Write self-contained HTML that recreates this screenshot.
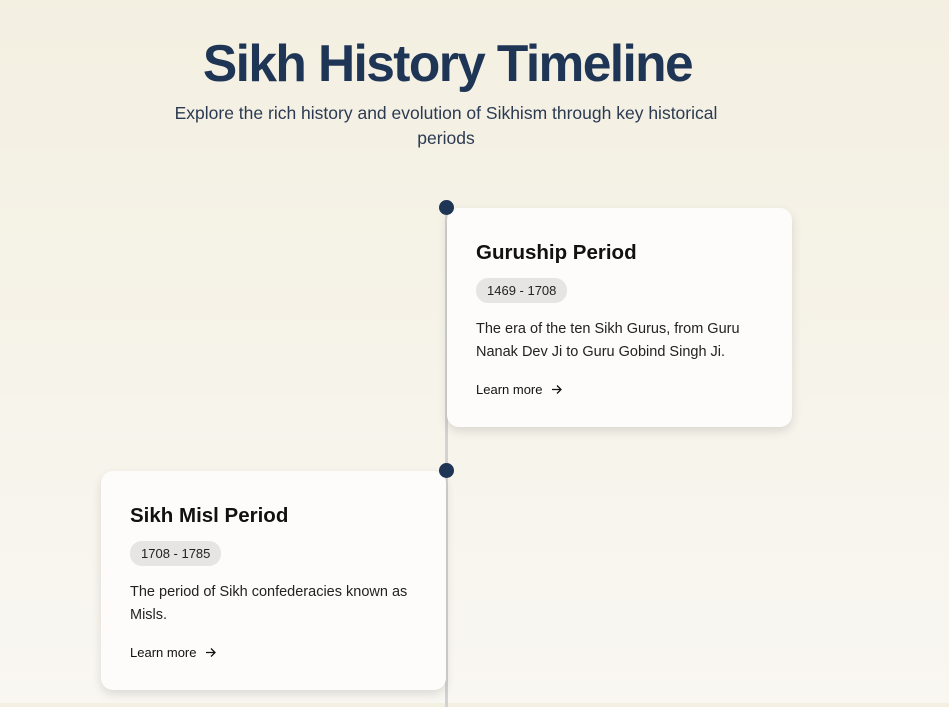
<!DOCTYPE html>
<html><head><style>
*{box-sizing:border-box;margin:0;padding:0}
body{width:949px;height:703px;overflow:hidden;font-family:"Liberation Sans",sans-serif;background:linear-gradient(#f3efe1,#f9f7f2);position:relative}
h1{position:absolute;top:33px;left:0;width:895px;text-align:center;font-size:51.5px;font-weight:bold;color:#1f3556;letter-spacing:-1.6px}
.sub{position:absolute;top:101px;left:166px;width:560px;text-align:center;font-size:17.5px;line-height:25px;color:#2b3a52}
.line{position:absolute;left:445px;top:207px;width:2.5px;height:500px;background:#d2d2d2}
.dot{position:absolute;left:439px;width:15px;height:15px;border-radius:50%;background:#1f3556}
.card{position:absolute;width:345px;height:219px;background:#fdfcfa;border-radius:12px;box-shadow:0 4px 10px rgba(0,0,0,.12);padding:30px 29px}
.card h2{font-size:20.5px;font-weight:bold;color:#111;margin-top:3px}
.tag{display:inline-block;margin-top:13px;background:#e6e5e3;border-radius:12px;padding:5px 11px;font-size:13px;color:#222}
.card p{margin-top:15px;font-size:14.5px;line-height:23px;color:#222}
.lm{position:absolute;left:29px;top:174px;font-size:13px;color:#111;display:flex;align-items:center}
.lm svg{margin-left:9px}
</style></head><body>
<h1>Sikh History Timeline</h1>
<div class="sub">Explore the rich history and evolution of Sikhism through key historical periods</div>
<div class="line"></div>
<div class="card" style="left:447px;top:208px"><h2>Guruship Period</h2><span class="tag">1469 - 1708</span><p>The era of the ten Sikh Gurus, from Guru Nanak Dev Ji to Guru Gobind Singh Ji.</p><div class="lm">Learn more<svg width="11" height="11" viewBox="0 0 11 11" fill="none" stroke="#111" stroke-width="1.3"><path d="M1 5.5h9M6 1.5l4 4-4 4"/></svg></div></div>
<div class="card" style="left:101px;top:471px"><h2>Sikh Misl Period</h2><span class="tag">1708 - 1785</span><p>The period of Sikh confederacies known as Misls.</p><div class="lm">Learn more<svg width="11" height="11" viewBox="0 0 11 11" fill="none" stroke="#111" stroke-width="1.3"><path d="M1 5.5h9M6 1.5l4 4-4 4"/></svg></div></div>
<div class="dot" style="top:200px"></div>
<div class="dot" style="top:463px"></div>
</body></html>
